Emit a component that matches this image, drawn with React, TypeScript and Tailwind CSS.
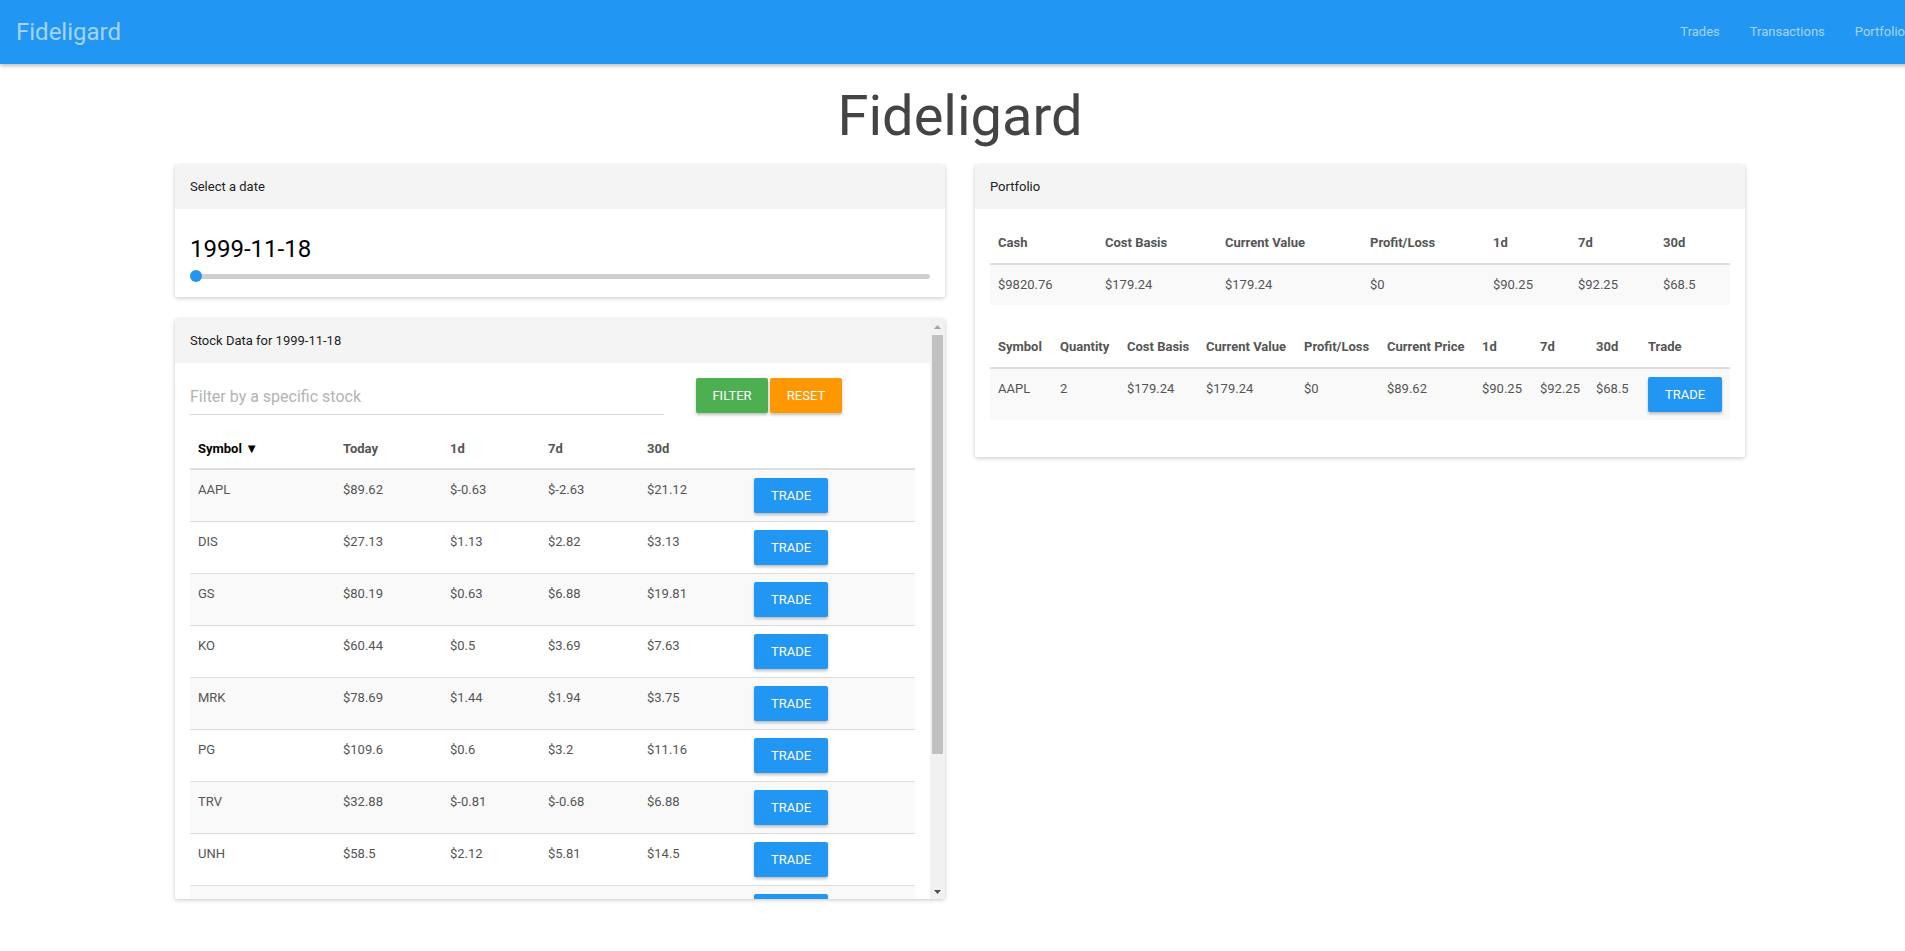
const stocks = [
  ["AAPL", "$89.62", "$-0.63", "$-2.63", "$21.12"],
  ["DIS", "$27.13", "$1.13", "$2.82", "$3.13"],
  ["GS", "$80.19", "$0.63", "$6.88", "$19.81"],
  ["KO", "$60.44", "$0.5", "$3.69", "$7.63"],
  ["MRK", "$78.69", "$1.44", "$1.94", "$3.75"],
  ["PG", "$109.6", "$0.6", "$3.2", "$11.16"],
  ["TRV", "$32.88", "$-0.81", "$-0.68", "$6.88"],
  ["UNH", "$58.5", "$2.12", "$5.81", "$14.5"],
  ["VZ", "$56.31", "$0.44", "$1.25", "$4.06"],
  ["WMT", "$62.19", "$-0.38", "$2.56", "$8.94"],
  ["XOM", "$80.5", "$1.06", "$-1.19", "$5.75"],
];

function TradeButton() {
  return (
    <button className="h-[35px] rounded-[2px] bg-[#2196f3] px-[17px] text-[13px] text-white shadow-[0_2px_3px_rgba(0,0,0,0.25)]">
      TRADE
    </button>
  );
}

function CardHeader({ title }: { title: string }) {
  return (
    <div className="flex h-[44px] items-center bg-[#f4f4f4] px-[15px] text-[13px] text-[#222]">
      {title}
    </div>
  );
}

function DateCard() {
  return (
    <div className="rounded-[2px] bg-white shadow-[0_1px_4px_rgba(0,0,0,0.22)]">
      <CardHeader title="Select a date" />
      <div className="px-[15px] pb-[15px] pt-[26px]">
        <div className="text-[24px] leading-[28px] text-black">1999-11-18</div>
        <div className="relative mt-[7px] h-[12px]">
          <div className="absolute left-0 right-0 top-[4px] h-[5px] rounded-full bg-[#d0d0d0]" />
          <div className="absolute left-0 top-0 h-[12px] w-[12px] rounded-full bg-[#2196f3]" />
        </div>
      </div>
    </div>
  );
}

function Scrollbar() {
  return (
    <div className="flex w-[15px] flex-col bg-[#f1f1f1]">
      <div className="flex h-[15px] items-center justify-center">
        <svg width="7" height="4" viewBox="0 0 7 4">
          <path d="M0 4 L3.5 0 L7 4 Z" fill="#a3a3a3" />
        </svg>
      </div>
      <div className="mx-[2px] mt-[1px] h-[419px] bg-[#c1c1c1]" />
      <div className="flex-1" />
      <div className="flex h-[15px] items-center justify-center">
        <svg width="7" height="4" viewBox="0 0 7 4">
          <path d="M0 0 L3.5 4 L7 0 Z" fill="#505050" />
        </svg>
      </div>
    </div>
  );
}

function StockCard() {
  return (
    <div className="flex h-[580px] overflow-hidden rounded-[2px] bg-white shadow-[0_1px_4px_rgba(0,0,0,0.22)]">
      <div className="w-[755px] overflow-hidden">
        <CardHeader title="Stock Data for 1999-11-18" />
        <div className="px-[15px] pb-[15px] pt-[15px]">
          <div className="flex items-start">
            <input
              className="mt-[1px] h-[36px] w-[474px] border-b border-[#d9d9d9] bg-transparent text-[16px] text-[#333] outline-none placeholder:text-[#b3b3b3]"
              placeholder="Filter by a specific stock"
            />
            <div className="ml-[32px] flex gap-[2px]">
              <button className="h-[35px] w-[72px] rounded-[2px] bg-[#4caf50] text-[13px] text-white shadow-[0_2px_3px_rgba(0,0,0,0.25)]">
                FILTER
              </button>
              <button className="h-[35px] w-[72px] rounded-[2px] bg-[#ff9800] text-[13px] text-white shadow-[0_2px_3px_rgba(0,0,0,0.25)]">
                RESET
              </button>
            </div>
          </div>
          <table className="mt-[16px] w-full table-fixed text-left text-[13px]">
            <colgroup>
              <col className="w-[145px]" />
              <col className="w-[107px]" />
              <col className="w-[98px]" />
              <col className="w-[99px]" />
              <col className="w-[107px]" />
              <col />
            </colgroup>
            <thead>
              <tr className="border-b-2 border-[#ddd] font-bold leading-[20px] text-[#555]">
                <th className="px-2 pb-[9px] pt-[8px] text-black">Symbol ▼</th>
                <th className="px-2 pb-[9px] pt-[8px]">Today</th>
                <th className="px-2 pb-[9px] pt-[8px]">1d</th>
                <th className="px-2 pb-[9px] pt-[8px]">7d</th>
                <th className="px-2 pb-[9px] pt-[8px]">30d</th>
                <th className="px-2 pb-[9px] pt-[8px]"></th>
              </tr>
            </thead>
            <tbody>
              {stocks.map((s, i) => (
                <tr
                  key={s[0]}
                  className={`border-t border-[#ddd] leading-[20px] text-[#555] ${i % 2 === 0 ? "bg-[#f9f9f9]" : "bg-white"}`}
                >
                  {s.map((v, j) => (
                    <td key={j} className="px-2 pt-[10px] align-top">
                      {v}
                    </td>
                  ))}
                  <td className="px-2 py-[8px] align-top">
                    <TradeButton />
                  </td>
                </tr>
              ))}
            </tbody>
          </table>
        </div>
      </div>
      <Scrollbar />
    </div>
  );
}

function PortfolioCard() {
  const th = "px-2 py-[10px] font-bold";
  return (
    <div className="w-[770px] rounded-[2px] bg-white shadow-[0_1px_4px_rgba(0,0,0,0.22)]">
      <CardHeader title="Portfolio" />
      <div className="px-[15px] pb-[15px] pt-[14px]">
        <table className="mb-[22px] w-full table-fixed text-left text-[13px] leading-[20px] text-[#555]">
          <colgroup>
            <col className="w-[107px]" />
            <col className="w-[120px]" />
            <col className="w-[145px]" />
            <col className="w-[123px]" />
            <col className="w-[85px]" />
            <col className="w-[85px]" />
            <col />
          </colgroup>
          <thead>
            <tr className="border-b-2 border-[#ddd]">
              <th className={th}>Cash</th>
              <th className={th}>Cost Basis</th>
              <th className={th}>Current Value</th>
              <th className={th}>Profit/Loss</th>
              <th className={th}>1d</th>
              <th className={th}>7d</th>
              <th className={th}>30d</th>
            </tr>
          </thead>
          <tbody>
            <tr className="bg-[#f9f9f9]">
              {["$9820.76", "$179.24", "$179.24", "$0", "$90.25", "$92.25", "$68.5"].map((v, j) => (
                <td key={j} className="px-2 py-[10px]">
                  {v}
                </td>
              ))}
            </tr>
          </tbody>
        </table>
        <table className="mb-[22px] w-full table-fixed text-left text-[13px] leading-[20px] text-[#555]">
          <colgroup>
            <col className="w-[62px]" />
            <col className="w-[67px]" />
            <col className="w-[79px]" />
            <col className="w-[98px]" />
            <col className="w-[83px]" />
            <col className="w-[95px]" />
            <col className="w-[58px]" />
            <col className="w-[56px]" />
            <col className="w-[52px]" />
            <col />
          </colgroup>
          <thead>
            <tr className="border-b-2 border-[#ddd]">
              <th className={th}>Symbol</th>
              <th className={th}>Quantity</th>
              <th className={th}>Cost Basis</th>
              <th className={th}>Current Value</th>
              <th className={th}>Profit/Loss</th>
              <th className={th}>Current Price</th>
              <th className={th}>1d</th>
              <th className={th}>7d</th>
              <th className={th}>30d</th>
              <th className={th}>Trade</th>
            </tr>
          </thead>
          <tbody>
            <tr className="bg-[#f9f9f9]">
              {["AAPL", "2", "$179.24", "$179.24", "$0", "$89.62", "$90.25", "$92.25", "$68.5"].map((v, j) => (
                <td key={j} className="whitespace-nowrap px-2 pt-[10px] align-top">
                  {v}
                </td>
              ))}
              <td className="px-2 py-[8px] align-top">
                <TradeButton />
              </td>
            </tr>
          </tbody>
        </table>
      </div>
    </div>
  );
}

export default function App() {
  return (
    <div className="min-h-screen w-full overflow-hidden bg-white font-[Roboto,sans-serif]">
      <div className="w-[1920px] pb-[40px]">
        <nav className="flex h-[64px] items-center justify-between bg-[#2196f3] pl-[16px] shadow-[0_2px_4px_rgba(0,0,0,0.25)]">
          <span className="text-[24px] text-white/60">Fideligard</span>
          <ul className="flex text-[13px] text-white/60">
            <li className="px-[15px]">Trades</li>
            <li className="px-[15px]">Transactions</li>
            <li className="px-[15px]">Portfolio</li>
          </ul>
        </nav>
        <h1 className="mt-[21px] text-center text-[56px] font-normal leading-[62px] text-[#444]">Fideligard</h1>
        <div className="mt-[18px] flex items-start justify-center gap-[30px]">
          <div className="flex w-[770px] flex-col gap-[22px]">
            <DateCard />
            <StockCard />
          </div>
          <PortfolioCard />
        </div>
      </div>
    </div>
  );
}
